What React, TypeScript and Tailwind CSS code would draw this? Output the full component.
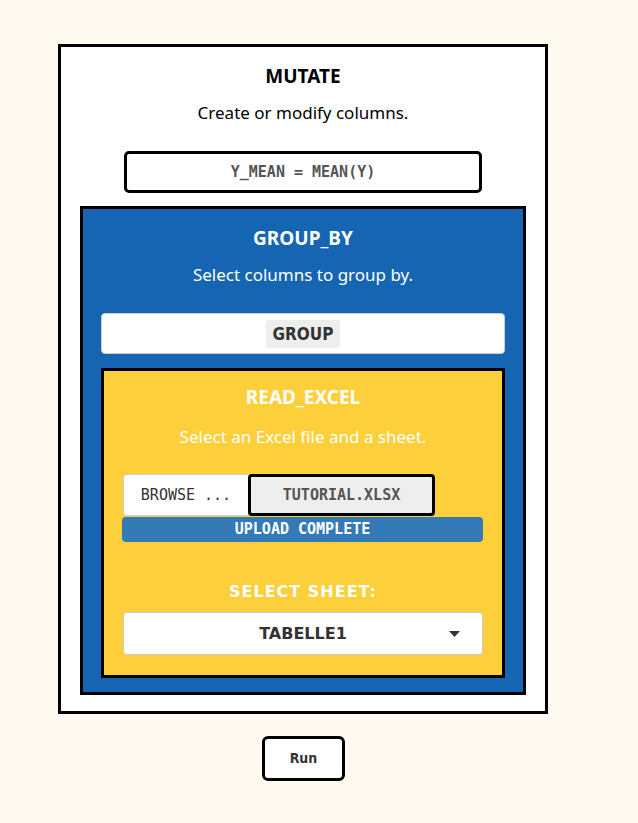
const head = {fontFamily: '"Noto Sans", "DejaVu Sans", sans-serif'};

function Title({children, light}: {children: string; light?: boolean}) {
  return (
    <h2 className={`text-center text-[19px] font-bold leading-6 ${light ? 'text-white' : 'text-black'}`} style={head}>
      {children}
    </h2>
  );
}

function Sub({children, light, mt = 'mt-[13px]'}: {children: string; light?: boolean; mt?: string}) {
  return (
    <p className={`${mt} text-center text-[17px] leading-6 ${light ? 'text-white' : 'text-black'}`} style={head}>
      {children}
    </p>
  );
}

export default function App() {
  return (
    <div className="min-h-[823px] bg-[#fefaf0] pl-[58px] pt-[44px] font-['Liberation_Sans',sans-serif]">
      <div className="w-[490px] border-[3px] border-black bg-white pb-[16px] pt-[17px]">
        <Title>MUTATE</Title>
        <Sub>Create or modify columns.</Sub>
        <div className="mx-auto mt-[26px] flex h-[42px] w-[358px] items-center justify-center rounded-[5px] border-[3px] border-black bg-white font-['DejaVu_Sans_Mono',monospace] text-[15px] font-bold text-[#555]">
          Y_MEAN = MEAN(Y)
        </div>

        <div className="mx-[19px] mt-[13px] border-[3px] border-black bg-[#1565b2] px-[18px] pb-[14px] pt-[17px]">
          <Title light>GROUP_BY</Title>
          <Sub light>Select columns to group by.</Sub>
          <div className="mt-[26px] flex h-[41px] items-center justify-center rounded-[4px] border border-[#ccc] bg-white">
            <span className="rounded-[3px] bg-[#eee] px-[7px] py-[2px] font-['DejaVu_Sans_Condensed','DejaVu_Sans',sans-serif] text-[17px] font-bold leading-6 text-[#333]">
              GROUP
            </span>
          </div>

          <div className="mt-[14px] border-[3px] border-black bg-[#fdd03b] px-[19px] pb-[20px] pt-[14px]">
            <Title light>READ_EXCEL</Title>
            <Sub light mt="mt-[16px]">Select an Excel file and a sheet.</Sub>
            <div className="mt-[25px] flex h-[42px] w-[312px]">
              <div className="flex w-[125px] items-center justify-center rounded-l-[4px] border border-[#ccc] border-r-0 bg-white font-['DejaVu_Sans_Mono',monospace] text-[15px] text-[#333]">
                BROWSE ...
              </div>
              <div className="flex flex-1 items-center justify-center rounded-[4px] border-[3px] border-black bg-[#eee] font-['DejaVu_Sans_Mono',monospace] text-[15px] font-bold text-[#555]">
                TUTORIAL.XLSX
              </div>
            </div>
            <div className="-ml-px mt-px flex h-[25px] items-center justify-center rounded-[4px] bg-[#337ab7] font-['DejaVu_Sans_Mono',monospace] text-[15px] font-bold text-white">
              UPLOAD COMPLETE
            </div>
            <div className="mt-[38px] text-center font-['DejaVu_Sans',sans-serif] text-[16px] font-bold tracking-[1px] text-white">
              SELECT SHEET:
            </div>
            <div className="relative mt-[8px] flex h-[43px] items-center justify-center rounded-[4px] border border-[#ccc] bg-white font-['DejaVu_Sans',sans-serif] text-[16px] font-bold text-[#333]">
              TABELLE1
              <svg className="absolute right-[22px] top-[18px]" width="11" height="6" viewBox="0 0 11 6">
                <path d="M0 0h11L5.5 6z" fill="#333" />
              </svg>
            </div>
          </div>
        </div>
      </div>

      <button className="ml-[204px] mt-[22px] block h-[45px] w-[83px] rounded-[6px] border-[3px] border-black bg-white font-['DejaVu_Sans_Condensed','DejaVu_Sans',sans-serif] text-[14px] font-bold text-[#333]">
        Run
      </button>
    </div>
  );
}
